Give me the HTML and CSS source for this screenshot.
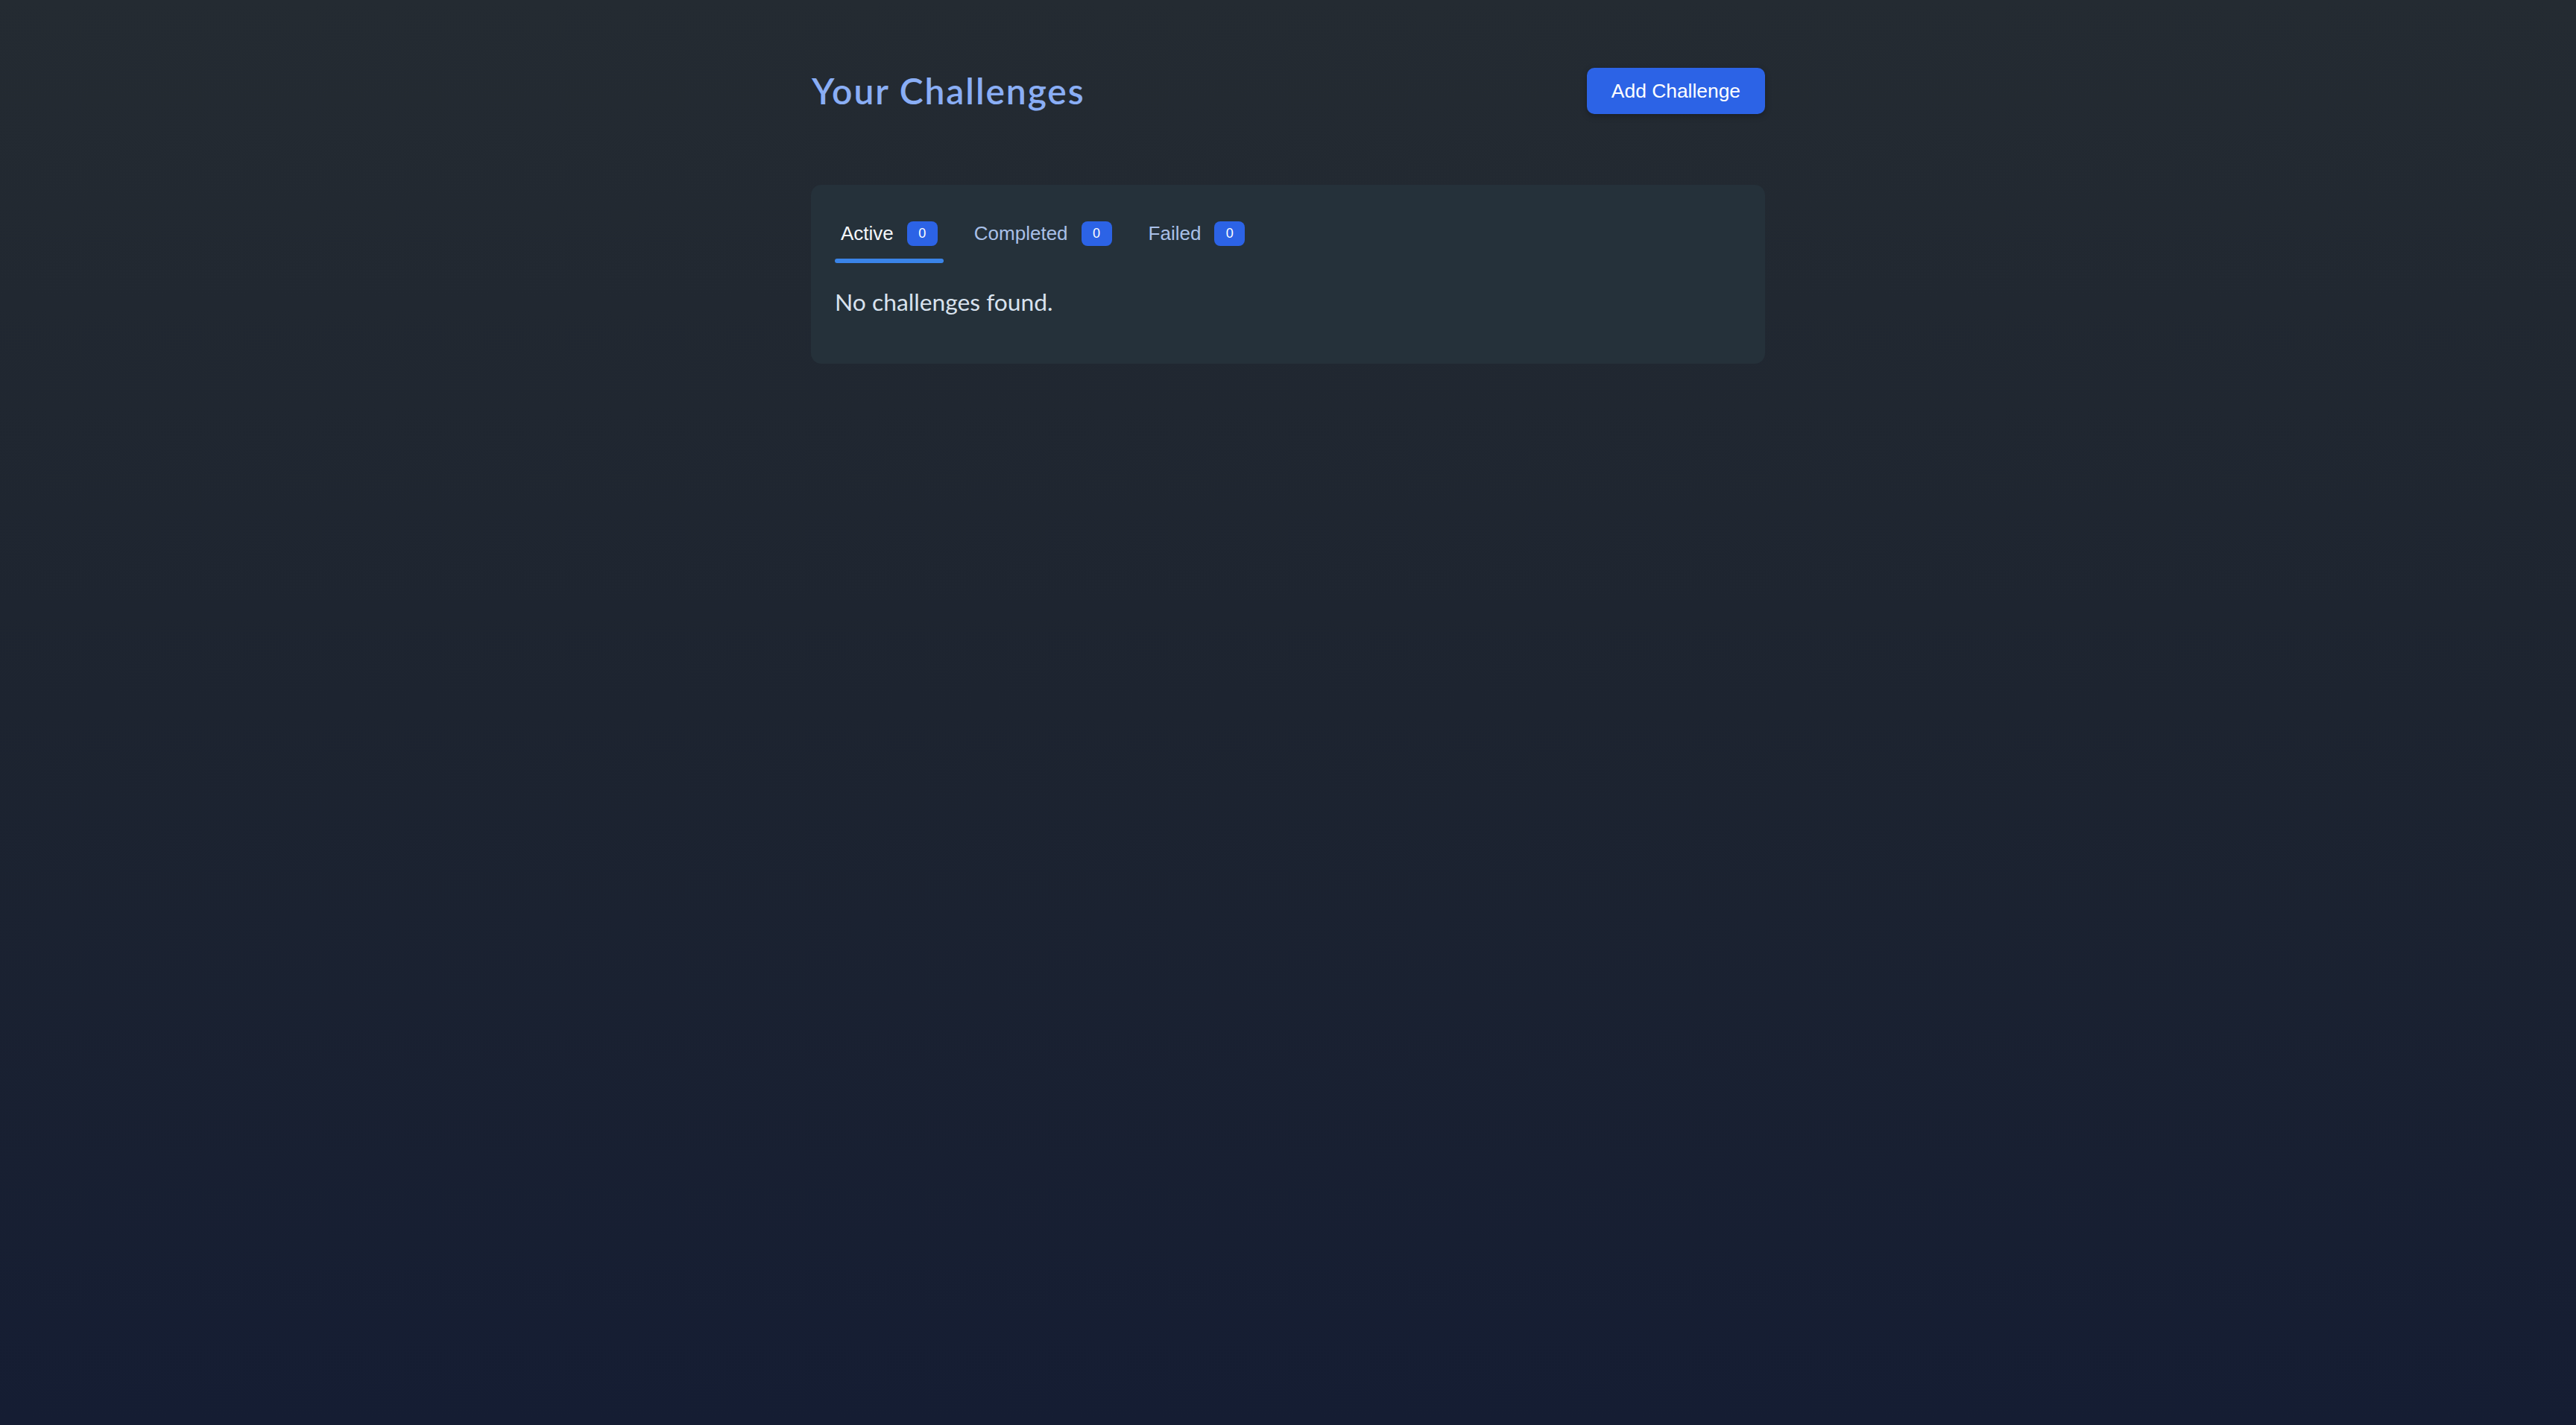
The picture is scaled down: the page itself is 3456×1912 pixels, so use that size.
FILE: index.html
```html
<!DOCTYPE html>
<html lang="en">
<head>
<meta charset="utf-8">
<title>Your Challenges</title>
<link rel="stylesheet" href="styles.css">
</head>
<body>
<main class="page">
  <header class="header">
    <h1 class="title">Your Challenges</h1>
    <button class="btn-primary" type="button">Add Challenge</button>
  </header>
  <section class="card">
    <nav class="tabs">
      <div class="tab tab-active"><span class="tab-label">Active</span><span class="badge">0</span></div>
      <div class="tab"><span class="tab-label">Completed</span><span class="badge">0</span></div>
      <div class="tab"><span class="tab-label">Failed</span><span class="badge">0</span></div>
    </nav>
    <p class="empty">No challenges found.</p>
  </section>
</main>
</body>
</html>
```

FILE: styles.css
```css
html, body {
  margin: 0;
  padding: 0;
  min-height: 100%;
}
body {
  min-height: 1912px;
  background: linear-gradient(to bottom, #242b32 0%, #1d2430 50%, #151d33 100%);
  font-family: "Liberation Sans", Arial, sans-serif;
  color: #e6edf7;
}
.page {
  width: 1280px;
  margin: 0 auto;
  padding-top: 91px;
}
.header {
  display: flex;
  align-items: center;
  justify-content: space-between;
  height: 62px;
  margin-bottom: 95px;
}
.title {
  margin: 0;
  font-family: Lato, "Noto Sans", sans-serif;
  font-weight: 600;
  font-size: 48px;
  line-height: 1;
  color: #8aaef5;
  letter-spacing: 1.9px;
  padding-left: 1px;
}
.btn-primary {
  height: 62px;
  padding: 0 33px;
  border: none;
  border-radius: 10px;
  background: #2c63e6;
  color: #ffffff;
  font-family: "Liberation Sans", Arial, sans-serif;
  font-size: 26.4px;
  box-shadow: 0 3px 8px rgba(0, 0, 0, 0.25);
}
.card {
  background: #25313a;
  border-radius: 14px;
  padding: 32px 32px 32px;
}
.tabs {
  display: flex;
  gap: 33px;
}
.tab {
  display: flex;
  align-items: center;
  gap: 18px;
  padding: 16px 8px 17px;
  border-bottom: 6px solid transparent;
  position: relative;
}
.tab-active {
  border-bottom: none;
  padding-bottom: 23px;
}
.tab-active::after {
  content: "";
  position: absolute;
  left: 0;
  right: 0;
  bottom: 0;
  height: 6px;
  border-radius: 3px;
  background: #3a84e8;
}
.tab-label {
  font-size: 26px;
  line-height: 33px;
  padding-top: 1px;
  color: #a9c0e8;
}
.tab-active .tab-label {
  color: #f4f7fb;
}
.badge {
  display: inline-flex;
  align-items: center;
  justify-content: center;
  width: 41px;
  height: 33px;
  border-radius: 8px;
  background: #2c63e6;
  color: #ffffff;
  font-size: 18px;
}
.empty {
  margin: 28px 0 27px;
  font-family: Lato, "Noto Sans", sans-serif;
  font-size: 31.8px;
  line-height: 48px;
  color: #d8e2ee;
}
```
